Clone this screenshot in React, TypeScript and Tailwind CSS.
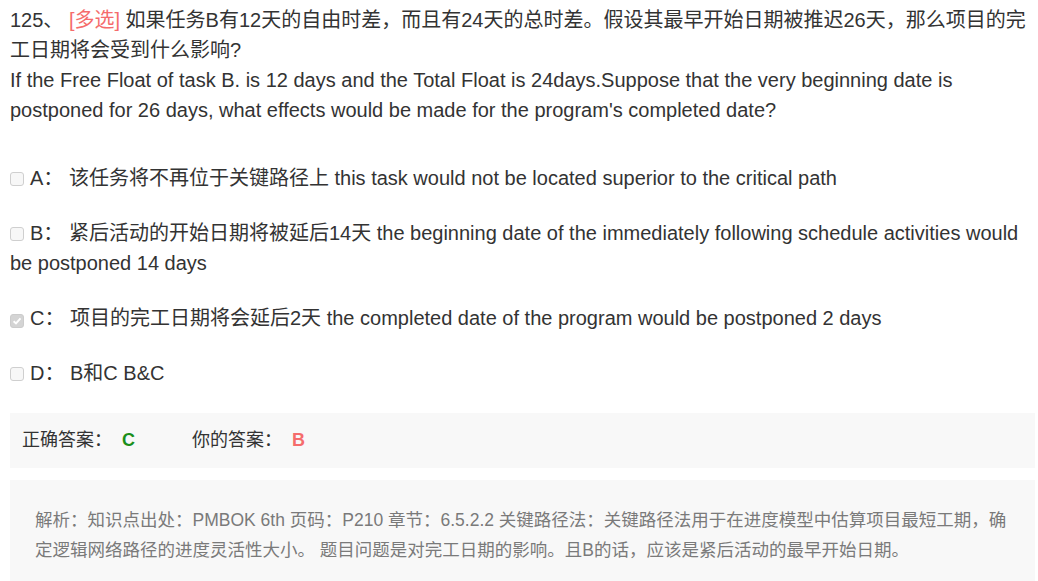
import React from "react";

const font = { fontFamily: 'Arial, "Liberation Sans", "Noto Sans CJK SC", sans-serif' };

function Box({ checked }: { checked?: boolean }) {
  return (
    <span
      className={
        "inline-flex items-center justify-center w-[14px] h-[14px] rounded-[3px] border mr-[6px] relative top-[1px] " +
        (checked ? "bg-[#d4d4d4] border-[#cccccc]" : "bg-[#f7f7f7] border-[#cfcfcf]")
      }
    >
      {checked && (
        <svg width="10" height="10" viewBox="0 0 10 10">
          <path d="M1.6 5.2 L4 7.5 L8.5 2.4" stroke="#ffffff" strokeWidth="1.9" fill="none" />
        </svg>
      )}
    </span>
  );
}

export default function App() {
  return (
    <div className="w-[1038px] h-[581px] bg-white overflow-hidden text-[#333]" style={font}>
      <div className="pl-[10px] w-[1035px]">
        <div className="pt-[5px] leading-[30px] text-[20px] w-[1020px]">
          <div>
            125、 <span className="text-[#f56c6c]">[多选]</span> 如果任务B有12天的自由时差，而且有24天的总时差。假设其最早开始日期被推迟26天，那么项目的完工日期将会受到什么影响?
          </div>
          <div>
            If the Free Float of task B. is 12 days and the Total Float is 24days.Suppose that the very beginning date is postponed for 26 days, what effects would be made for the program's completed date?
          </div>
        </div>
        <div className="mt-[38px] flex flex-col gap-[25px] leading-[30px] text-[20px]">
          <div><Box />A： 该任务将不再位于关键路径上 this task would not be located superior to the critical path</div>
          <div><Box />B： 紧后活动的开始日期将被延后14天 the beginning date of the immediately following schedule activities would be postponed 14 days</div>
          <div><Box checked />C：  项目的完工日期将会延后2天 the completed date of the program would be postponed 2 days</div>
          <div><Box />D： B和C B&amp;C</div>
        </div>
        <div className="mt-[25px] h-[55px] bg-[#f8f8f8] flex items-center pl-[12px] text-[18px]">
          <span>正确答案：</span>
          <span className="ml-[10px] text-[#1a8f1a] font-bold">C</span>
          <span className="ml-[57px]">你的答案：</span>
          <span className="ml-[10px] text-[#f56c6c] font-bold">B</span>
        </div>
        <div className="mt-[12px] bg-[#f8f8f8] pt-[25px] pb-[30px] px-[25px] text-[17.5px] leading-[30px] text-[#7a7a7a]">
          解析：知识点出处：PMBOK 6th 页码：P210 章节：6.5.2.2 关键路径法：关键路径法用于在进度模型中估算项目最短工期，确定逻辑网络路径的进度灵活性大小。 题目问题是对完工日期的影响。且B的话，应该是紧后活动的最早开始日期。
        </div>
      </div>
    </div>
  );
}
